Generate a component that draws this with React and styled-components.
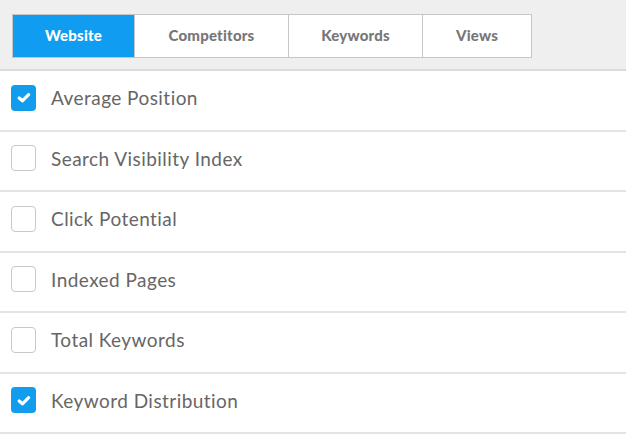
import React, { useState } from 'react';
import styled, { createGlobalStyle } from 'styled-components';

const GlobalStyle = createGlobalStyle`
  body {
    margin: 0;
    background: #fff;
    font-family: Lato, "Open Sans", sans-serif;
  }
`;

const tabs = ['Website', 'Competitors', 'Keywords', 'Views'];
const tabWidths = [121, 154, 134, 109];

const metrics = [
  { label: 'Average Position', checked: true },
  { label: 'Search Visibility Index', checked: false },
  { label: 'Click Potential', checked: false },
  { label: 'Indexed Pages', checked: false },
  { label: 'Total Keywords', checked: false },
  { label: 'Keyword Distribution', checked: true },
];

export default function App() {
  const [active, setActive] = useState(0);
  const [items, setItems] = useState(metrics);

  const toggle = (i) =>
    setItems(items.map((m, j) => (j === i ? { ...m, checked: !m.checked } : m)));

  return (
    <Page>
      <GlobalStyle />
      <Header>
        <TabBar>
          {tabs.map((t, i) => (
            <Tab
              key={t}
              $active={i === active}
              $width={tabWidths[i]}
              onClick={() => setActive(i)}
            >
              {t}
            </Tab>
          ))}
        </TabBar>
      </Header>
      <List>
        {items.map((m, i) => (
          <Row key={m.label} onClick={() => toggle(i)}>
            <Box $checked={m.checked}>
              {m.checked && (
                <svg width="14" height="11" viewBox="0 0 14 11">
                  <path
                    d="M2.2 6 L5.4 8.8 L11.6 2.6"
                    fill="none"
                    stroke="#fff"
                    strokeWidth="3.2"
                    strokeLinecap="round"
                    strokeLinejoin="round"
                  />
                </svg>
              )}
            </Box>
            <Label>{m.label}</Label>
          </Row>
        ))}
      </List>
    </Page>
  );
}

const Page = styled.div`
  width: 626px;
  height: 438px;
  overflow: hidden;
`;

const Header = styled.div`
  height: 71px;
  box-sizing: border-box;
  background: #efefef;
  border-bottom: 2px solid #dcdcdc;
  padding: 14px 0 0 12px;
`;

const TabBar = styled.div`
  display: flex;
  height: 44px;
  box-sizing: border-box;
  border: 1.5px solid #c6c6c6;
  width: max-content;
`;

const Tab = styled.div`
  width: ${(p) => p.$width}px;
  box-sizing: border-box;
  display: flex;
  align-items: center;
  justify-content: center;
  padding-bottom: 2px;
  background: ${(p) => (p.$active ? '#109cf0' : '#fff')};
  color: ${(p) => (p.$active ? '#fff' : '#777')};
  font-weight: 900;
  font-size: 15px;
  letter-spacing: 0.2px;
  cursor: pointer;
  & + & {
    border-left: 1.5px solid #c6c6c6;
  }
`;

const List = styled.div`
  display: flex;
  flex-direction: column;
`;

const Row = styled.div`
  height: 58.5px;
  box-sizing: content-box;
  border-bottom: 2px solid #e4e4e4;
  display: flex;
  align-items: center;
  padding-left: 11px;
  gap: 15px;
  cursor: pointer;
`;

const Box = styled.div`
  width: 25px;
  height: 26px;
  margin-top: -5px;
  box-sizing: border-box;
  border-radius: 4px;
  display: flex;
  align-items: center;
  justify-content: center;
  background: ${(p) => (p.$checked ? '#129cee' : '#fff')};
  border: ${(p) => (p.$checked ? 'none' : '1.5px solid #c8c8c8')};
`;

const Label = styled.span`
  margin-top: -5px;
  font-size: 19px;
  color: #666;
  letter-spacing: 0.45px;
`;
